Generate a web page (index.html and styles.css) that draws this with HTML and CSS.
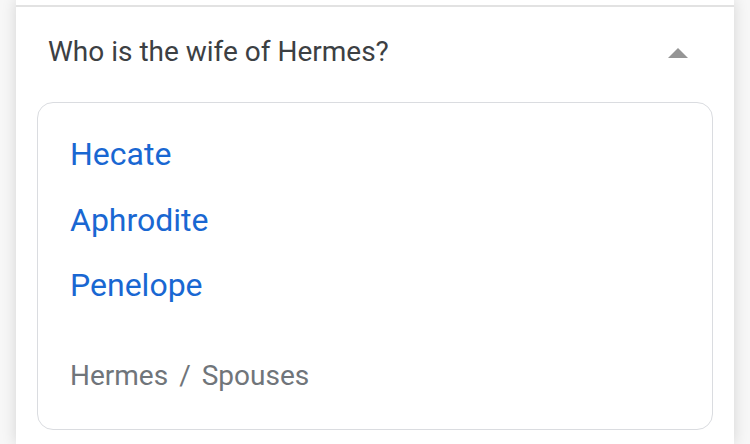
FILE: index.html
```html
<!DOCTYPE html>
<html lang="en">
<head>
<meta charset="utf-8">
<title>Who is the wife of Hermes?</title>
<link rel="stylesheet" href="styles.css">
</head>
<body>
<div class="panel">
  <div class="divider"></div>
  <div class="question-row">
    <span class="question">Who is the wife of Hermes?</span>
    <span class="caret" aria-hidden="true"></span>
  </div>
  <div class="answer-card">
    <ul class="answers">
      <li><a class="answer-link" href="#">Hecate</a></li>
      <li><a class="answer-link" href="#">Aphrodite</a></li>
      <li><a class="answer-link" href="#">Penelope</a></li>
    </ul>
    <div class="crumbs"><span>Hermes</span><span class="sep">/</span><span>Spouses</span></div>
  </div>
</div>
</body>
</html>
```

FILE: styles.css
```css
html, body {
  margin: 0;
  padding: 0;
  height: 100%;
  overflow: hidden;
}
body {
  background: #f7f7f7;
  font-family: Roboto, "Liberation Sans", Arial, sans-serif;
}
.panel {
  margin: 0 16px;
  height: 100%;
  background: #ffffff;
  box-shadow: 0 0 14px rgba(0, 0, 0, 0.14);
  padding-top: 5px;
  box-sizing: border-box;
}
.divider {
  height: 2px;
  background: #e2e2e2;
}
.question-row {
  display: flex;
  align-items: center;
  justify-content: space-between;
  padding: 27px 46px 0 32px;
  height: 36px;
}
.question {
  font-size: 28px;
  line-height: 36px;
  color: #3c4043;
}
.caret {
  width: 0;
  height: 0;
  border-left: 10px solid transparent;
  border-right: 10px solid transparent;
  border-bottom: 10px solid #959595;
  margin-top: 2px;
}
.answer-card {
  margin: 32px 21px 0 21px;
  border: 1.5px solid #dadce0;
  border-radius: 16px;
  padding: 19px 32px 35px 32px;
  height: 328px;
  box-sizing: border-box;
}
.answers {
  list-style: none;
  margin: 0;
  padding: 0;
}
.answers li {
  line-height: 65.5px;
  height: 65.5px;
}
.answer-link {
  font-size: 32px;
  color: #1967d2;
  text-decoration: none;
}
.crumbs {
  margin-top: 41px;
  font-size: 28px;
  line-height: 32px;
  color: #70757a;
}
.sep {
  margin: 0 11px;
}
```
